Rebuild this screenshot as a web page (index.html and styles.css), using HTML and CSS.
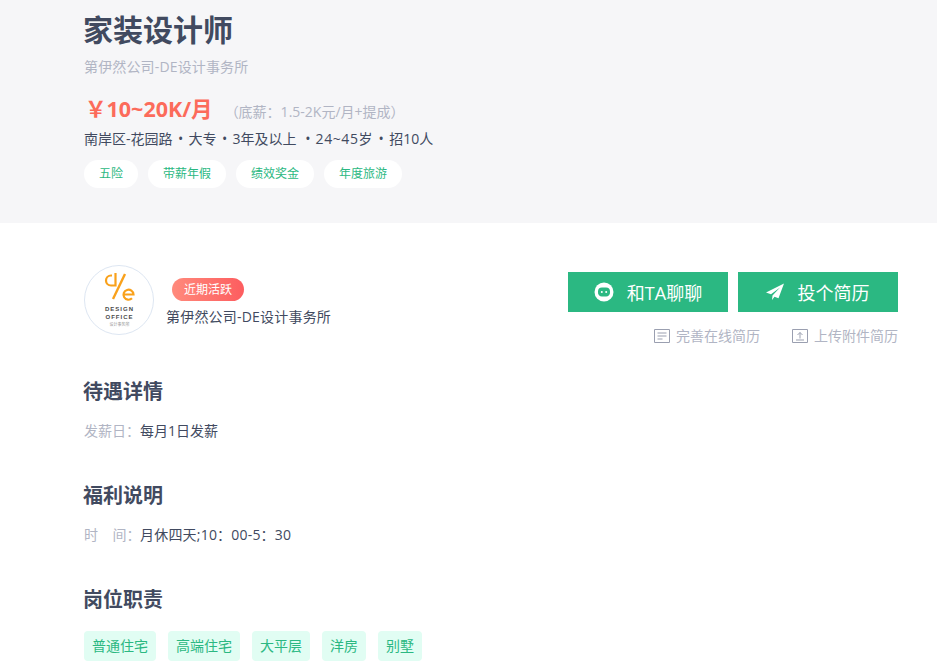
FILE: index.html
```html
<!DOCTYPE html>
<html lang="zh-CN">
<head>
  <meta charset="UTF-8">
  <meta name="viewport" content="width=device-width, initial-scale=1">
  <title>家装设计师</title>
  <link rel="stylesheet" href="styles.css">
</head>
<body>

  <header class="job-head">
    <div class="wrap">
      <h1>家装设计师</h1>
      <p class="head-company">第伊然公司-DE设计事务所</p>
      <p class="salary"><strong>￥10~20K/月</strong><span>（底薪：1.5-2K元/月+提成）</span></p>
      <p class="job-meta">南岸区-花园路<i>•</i>大专<i>•</i>3年及以上<i class="dot-wide">•</i><span class="age">24~45岁</span><i>•</i>招10人</p>
      <ul class="perks">
        <li>五险</li>
        <li>带薪年假</li>
        <li>绩效奖金</li>
        <li>年度旅游</li>
      </ul>
    </div>
  </header>

  <main class="wrap">
    <section class="company-row">
      <div class="company">
        <div class="logo">
          <svg width="70" height="70" viewBox="0 0 70 70">
            <circle cx="35" cy="35" r="34.500" fill="#fff" stroke="#dde6f2"/>
            <path d="M28 10.500h-1a5 5 0 0 0 0 10h4.500V8" fill="none" stroke="#f9a11b" stroke-width="2.200"/>
            <path d="M41 9L29 34" fill="none" stroke="#f9a11b" stroke-width="2.400"/>
            <path d="M39.500 29.500h10a5 5 0 1 0-1.500 3.800" fill="none" stroke="#f9a11b" stroke-width="2.200"/>
            <text x="35.500" y="45.500" class="logo-text">DESIGN</text>
            <text x="35.500" y="54" class="logo-text">OFFICE</text>
            <text x="35.500" y="61" class="logo-small">设计事务所</text>
          </svg>
        </div>
        <div class="company-info">
          <span class="active-tag">近期活跃</span>
          <span class="company-name">第伊然公司-DE设计事务所</span>
        </div>
      </div>

      <div class="apply">
        <div class="apply-btns">
          <a class="btn" href="#">
            <svg width="20" height="20" viewBox="0 0 20 20">
              <circle cx="10" cy="10" r="9.500" fill="#fff"/>
              <path d="M8 5.500h4a4 4 0 0 1 4 4v.500a4 4 0 0 1-4 4.500H8a4 4 0 0 1-4-4.500v-.500a4 4 0 0 1 4-4z" fill="#2bb882"/>
              <circle cx="7.800" cy="10" r="1" fill="#fff"/>
              <circle cx="12.200" cy="10" r="1" fill="#fff"/>
            </svg>
            和TA聊聊
          </a>
          <a class="btn btn-send" href="#">
            <svg width="20" height="18" viewBox="0 0 20 18">
              <path d="M19 .5L1 9.500l5 1.800L15 4.500 7.500 12.500l-.5 4.500 2.500-3.300 4 1.500z" fill="#fff"/>
            </svg>
            投个简历
          </a>
        </div>
        <div class="resume-links">
          <a href="#">
            <svg width="16" height="14" viewBox="0 0 16 14">
              <path d="M.5.500h15v13H.5z" fill="none" stroke="#9a9fb0"/>
              <path d="M3.500 4h9M3.500 7h9M3.500 10h5" fill="none" stroke="#9a9fb0"/>
            </svg>
            完善在线简历
          </a>
          <a href="#">
            <svg width="16" height="14" viewBox="0 0 16 14">
              <path d="M.5.500h15v13H.5z" fill="none" stroke="#9a9fb0"/>
              <path d="M8 9.500V3.500M5.500 6L8 3.500 10.500 6M4 11h8" fill="none" stroke="#9a9fb0"/>
            </svg>
            上传附件简历
          </a>
        </div>
      </div>
    </section>

    <section class="block">
      <h2>待遇详情</h2>
      <p class="line"><span class="line-label">发薪日：</span>每月1日发薪</p>
    </section>

    <section class="block">
      <h2>福利说明</h2>
      <p class="line"><span class="line-label">时&nbsp;&nbsp;&nbsp;&nbsp;间：</span><span class="line-time">月休四天;10：00-5：30</span></p>
    </section>

    <section class="block">
      <h2>岗位职责</h2>
      <ul class="duty-tags">
        <li>普通住宅</li>
        <li>高端住宅</li>
        <li>大平层</li>
        <li>洋房</li>
        <li>别墅</li>
      </ul>
    </section>
  </main>

</body>
</html>
```
FILE: styles.css
```css
* {
  box-sizing: border-box;
}

html,
body {
  height: 669px;
  overflow: hidden;
}

body {
  margin: 0;
  font-family: "Open Sans", "Noto Sans CJK SC", sans-serif;
  font-size: 14px;
  color: #414a60;
  background-color: #fff;
}

ul {
  list-style: none;
  margin: 0;
  padding: 0;
}

p,
h1,
h2 {
  margin: 0;
}

a {
  text-decoration: none;
}

.wrap {
  width: 814px;
  margin-left: 84px;
}

.job-head {
  background-color: #f6f6f8;
  height: 223px;
  padding-top: 8px;
}

.job-head h1 {
  font-size: 30px;
  line-height: 44px;
  font-weight: 700;
  margin-left: -1px;
}

.head-company {
  margin-top: 4px;
  line-height: 22px;
  color: #b1b5c4;
  letter-spacing: 0.15px;
}

.salary {
  margin-top: 14px;
  height: 28px;
  display: flex;
  align-items: baseline;
}

.salary strong {
  font-size: 21.5px;
  color: #fc6b5b;
  margin-left: 1px;
}

.salary span {
  margin-left: 12px;
  color: #b1b5c4;
}

.job-meta {
  margin-top: 7px;
  line-height: 24px;
}

.job-meta i {
  display: inline-block;
  width: 16px;
  text-align: center;
  font-style: normal;
}

.job-meta .dot-wide {
  width: 19px;
  text-align: right;
  padding-right: 5px;
}

.age {
  letter-spacing: 0.6px;
}

.perks {
  display: flex;
  gap: 10px;
  margin-top: 9px;
}

.perks li {
  height: 28px;
  line-height: 28px;
  padding: 0 15px;
  font-size: 12px;
  color: #2bb882;
  background-color: #fff;
  border-radius: 14px;
}

.company-row {
  display: flex;
  justify-content: space-between;
  padding-top: 42px;
  height: 155px;
}

.company {
  display: flex;
  gap: 12px;
}

.logo {
  width: 70px;
  height: 70px;
}

.logo-text {
  font-family: "Liberation Sans", sans-serif;
  font-size: 6px;
  font-weight: 700;
  letter-spacing: 1px;
  fill: #4a4a4a;
  text-anchor: middle;
}

.logo-small {
  font-family: "Noto Sans CJK SC", sans-serif;
  font-size: 4px;
  fill: #999;
  text-anchor: middle;
}

.company-info {
  display: flex;
  flex-direction: column;
  align-items: flex-start;
  padding-top: 13px;
}

.active-tag {
  margin-left: 6px;
  height: 23px;
  line-height: 23px;
  padding: 0 12px;
  font-size: 12px;
  color: #fff;
  border-radius: 12px;
  background-image: linear-gradient(90deg, #ff8a7c, #fd5d5f);
}

.company-name {
  margin-top: 5px;
  line-height: 22px;
  letter-spacing: 0.2px;
}

.apply {
  width: 330px;
  padding-top: 7px;
}

.apply-btns {
  display: flex;
  gap: 10px;
}

.btn {
  width: 160px;
  height: 40px;
  display: flex;
  align-items: center;
  justify-content: center;
  gap: 13px;
  font-size: 18px;
  color: #fff;
  background-color: #2bb882;
}

.btn-send {
  padding-right: 2px;
}

.resume-links {
  display: flex;
  justify-content: flex-end;
  gap: 32px;
  margin-top: 14px;
}

.resume-links a {
  display: flex;
  align-items: center;
  gap: 6px;
  line-height: 20px;
  color: #b1b5c4;
}

.block {
  height: 104px;
}

.block h2 {
  font-size: 20px;
  line-height: 28px;
  font-weight: 700;
  margin-left: -1px;
}

.line {
  margin-top: 14px;
  line-height: 22px;
}

.line-label {
  display: inline-block;
  width: 56px;
  white-space: nowrap;
  color: #b1b5c4;
}

.line-time {
  letter-spacing: 0.2px;
}

.duty-tags {
  display: flex;
  gap: 12px;
  margin-top: 17px;
}

.duty-tags li {
  height: 30px;
  line-height: 30px;
  padding: 0 8px;
  color: #2bb882;
  background-color: #e1fdf3;
  border-radius: 4px;
}
```
